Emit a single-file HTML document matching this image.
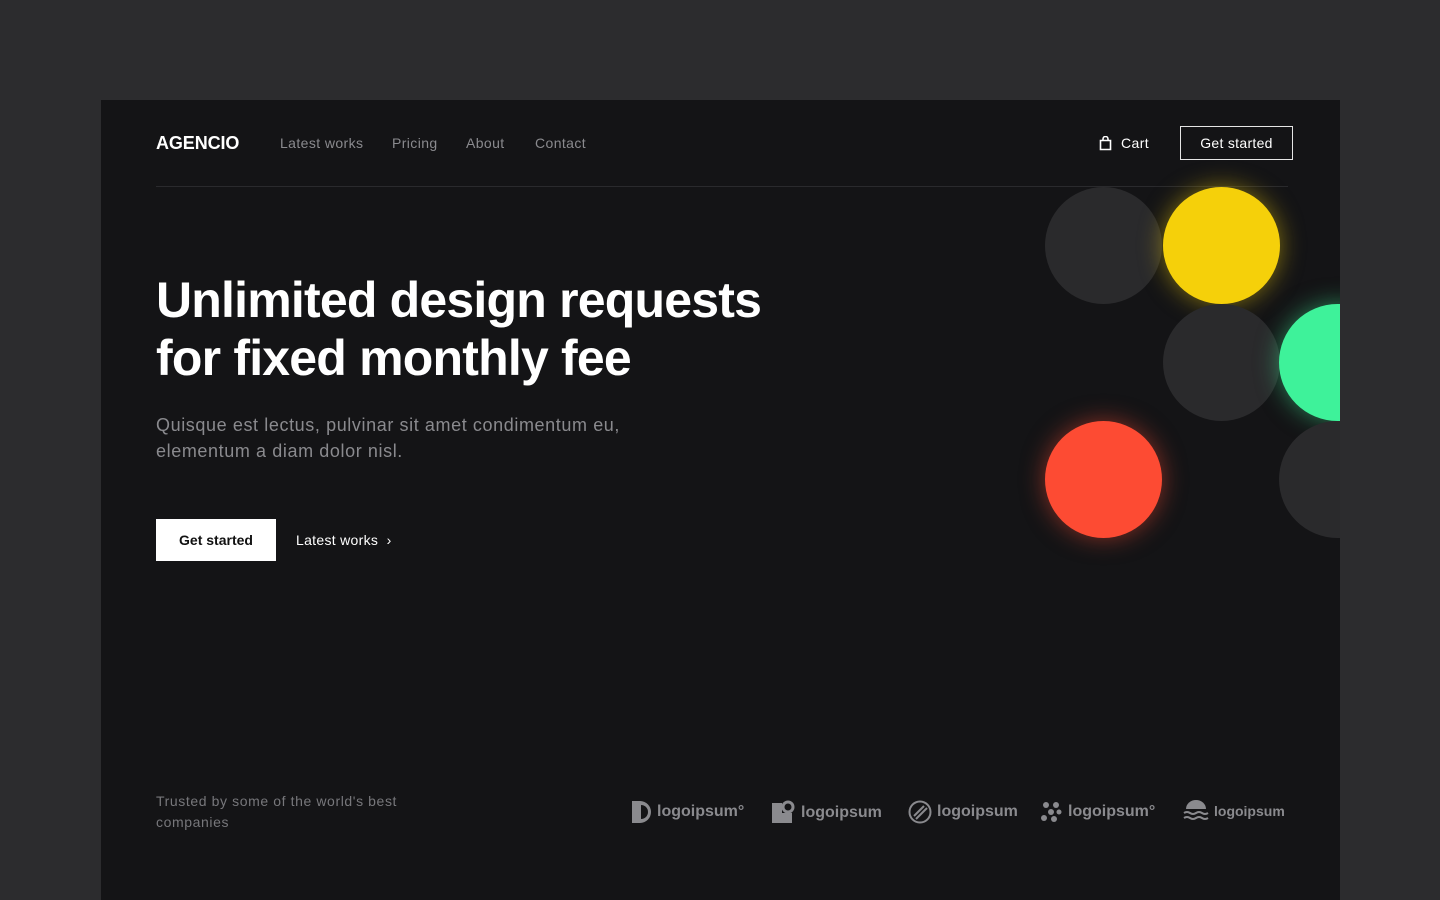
<!DOCTYPE html>
<html><head><style>
*{margin:0;padding:0;box-sizing:border-box}
body{width:1440px;height:900px;background:#2c2c2e;font-family:"Liberation Sans",sans-serif;overflow:hidden;position:relative}
.card{position:absolute;left:101px;top:100px;width:1239px;height:800px;background:#141416;overflow:hidden}
.abs{position:absolute}
.logo{left:55px;top:33px;color:#fff;font-size:18px;font-weight:bold;letter-spacing:-0.1px}
.nav{top:35px;color:#8a8a8e;font-size:14px;letter-spacing:0.4px}
.line{left:55px;top:86px;width:1132px;height:1px;background:#2a2a2d}
.btn2{left:1079px;top:26px;width:113px;height:34px;border:1px solid #e5e5e5;color:#fff;font-size:14px;text-align:center;line-height:32px;letter-spacing:0.3px}
.circ{position:absolute;width:117px;height:117px;border-radius:50%}
h1{position:absolute;left:55px;top:171px;color:#fff;font-size:50px;font-weight:bold;line-height:58px;letter-spacing:-0.8px}
.sub{left:55px;top:312px;color:#8a8a8e;font-size:18px;line-height:26px;letter-spacing:0.6px}
.b1{left:55px;top:419px;width:120px;height:42px;background:#fff;color:#111;font-size:14px;font-weight:bold;text-align:center;line-height:42px}
.b1t{left:195px;top:432px;color:#fff;font-size:14px;letter-spacing:0.3px}
.trust{left:55px;top:691px;color:#77777b;font-size:14px;line-height:21px;letter-spacing:0.6px}
.lg{top:700px;color:#8a8a8e;font-size:16px;font-weight:bold;display:flex;align-items:center;gap:5px}
</style></head><body>
<div class="card">
<div class="abs logo">AGENCIO</div>
<div class="abs nav" style="left:179px">Latest works</div>
<div class="abs nav" style="left:291px">Pricing</div>
<div class="abs nav" style="left:365px">About</div>
<div class="abs nav" style="left:434px">Contact</div>
<div class="abs nav" style="left:998px;color:#fff;display:flex;align-items:center;gap:9px"><svg width="13" height="15" viewBox="0 0 13 15"><path d="M1.5 4.5h10v9h-10z M4 4.5V3a2.5 2.5 0 0 1 5 0v1.5" fill="none" stroke="#fff" stroke-width="1.6"/></svg>Cart</div>
<div class="abs btn2">Get started</div>
<div class="abs line"></div>
<div class="circ" style="left:944px;top:87px;background:#2a2a2c"></div>
<div class="circ" style="left:1062px;top:87px;background:#f5d00a;box-shadow:0 0 24px rgba(245,208,10,.5)"></div>
<div class="circ" style="left:1062px;top:204px;background:#2a2a2c"></div>
<div class="circ" style="left:1178px;top:204px;background:#3ef29a;box-shadow:0 0 24px rgba(62,242,154,.5)"></div>
<div class="circ" style="left:944px;top:321px;background:#fd4b33;box-shadow:0 0 24px rgba(253,75,51,.5)"></div>
<div class="circ" style="left:1178px;top:321px;background:#2a2a2c"></div>
<h1>Unlimited design requests<br>for fixed monthly fee</h1>
<div class="abs sub">Quisque est lectus, pulvinar sit amet condimentum eu,<br>elementum a diam dolor nisl.</div>
<div class="abs b1">Get started</div>
<div class="abs b1t">Latest works &nbsp;›</div>
<div class="abs trust">Trusted by some of the world's best<br>companies</div>
<div class="abs lg" style="left:530px"><svg width="21" height="24"><path d="M1 1h8a11 11 0 0 1 0 22H1z" fill="#8a8a8e"/><path d="M10 5a7 7 0 0 1 0 14z" fill="#141416"/></svg>logoipsum°</div>
<div class="abs lg" style="left:670px"><svg width="25" height="25"><path d="M1 3h10v10h10v10H1z" fill="#8a8a8e"/><circle cx="17" cy="7" r="5" fill="none" stroke="#8a8a8e" stroke-width="3"/></svg>logoipsum</div>
<div class="abs lg" style="left:807px"><svg width="24" height="24"><circle cx="12" cy="12" r="10.5" fill="none" stroke="#8a8a8e" stroke-width="2"/><path d="M6 16l10-10M8 19l11-11" stroke="#8a8a8e" stroke-width="2"/></svg>logoipsum</div>
<div class="abs lg" style="left:938px"><svg width="24" height="24" fill="#8a8a8e"><circle cx="7" cy="5" r="3"/><circle cx="17" cy="5" r="3"/><circle cx="12" cy="12" r="3"/><circle cx="5" cy="18" r="3"/><circle cx="15" cy="19" r="3"/><circle cx="20" cy="12" r="2.5"/></svg>logoipsum°</div>
<div class="abs lg" style="left:1082px;font-size:14px"><svg width="26" height="22"><path d="M3 9a10 9 0 0 1 20 0z" fill="#8a8a8e"/><path d="M1 13q3-2 6 0t6 0 6 0 6 0M1 18q3-2 6 0t6 0 6 0 6 0" fill="none" stroke="#8a8a8e" stroke-width="2"/></svg>logoipsum</div>
</div>
</body></html>
